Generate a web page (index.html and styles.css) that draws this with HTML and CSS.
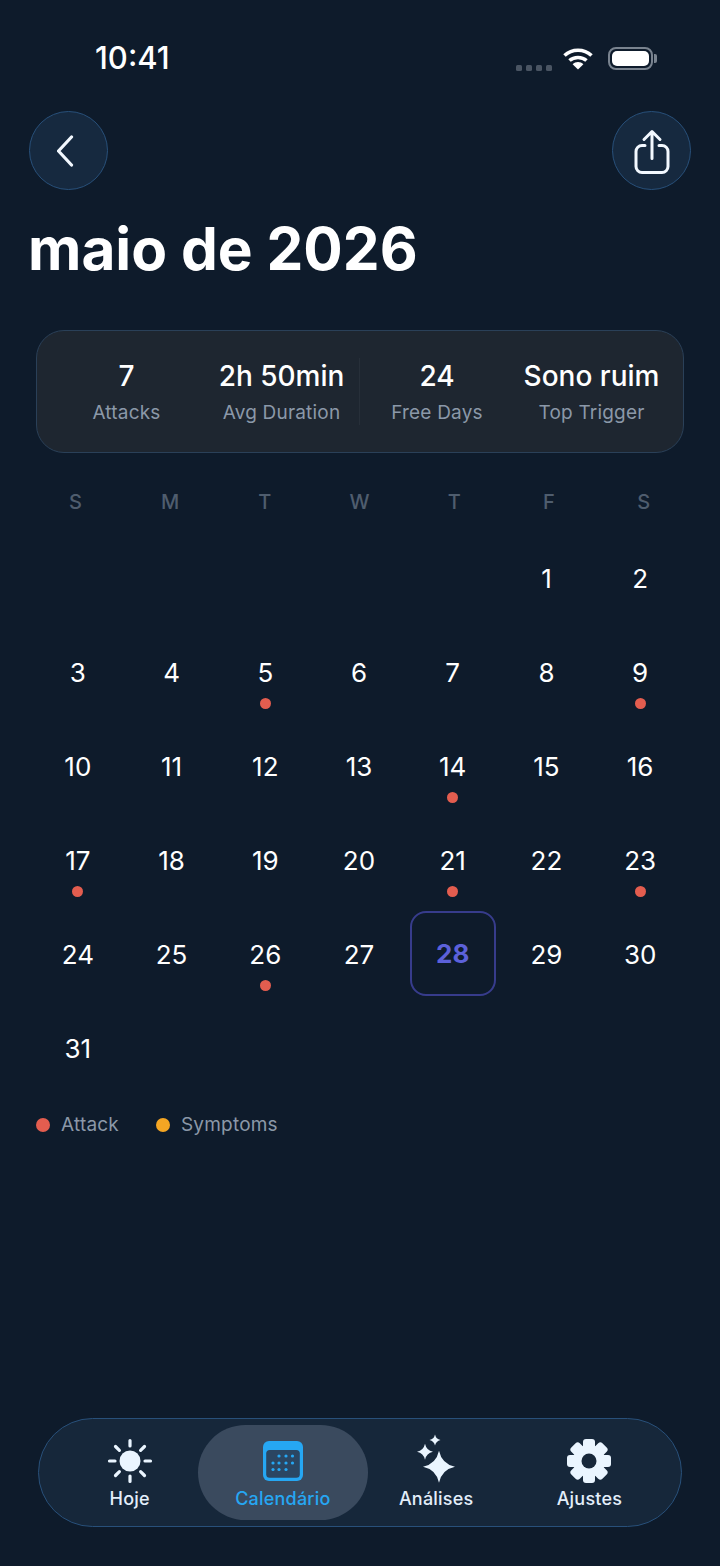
FILE: index.html
```html
<!DOCTYPE html>
<html lang="en">
<head>
    <meta charset="UTF-8">
    <meta name="viewport" content="width=device-width, initial-scale=1.0">
    <title>Calendário</title>
    <link rel="stylesheet" href="styles.css">
</head>
<body>
    <div class="status-bar">
        <span class="status-time">10:41</span>
        <div class="status-icons">
            <span class="signal"><i></i><i></i><i></i><i></i></span>
            <svg class="wifi" width="32" height="22" viewBox="0 0 30 22">
                <path d="M1.5 7.5C9 .5 21 .5 28.5 7.5" fill="none" stroke="#fff" stroke-width="3.6"/>
                <path d="M6.5 12.5C11 8.4 19 8.4 23.5 12.5" fill="none" stroke="#fff" stroke-width="3.6"/>
                <path d="M9.6 16.2C12.6 13.2 17.4 13.2 20.4 16.2L15 21.6Z" fill="#fff"/>
            </svg>
            <span class="battery"><span class="battery-fill"></span></span>
        </div>
    </div>

    <div class="top-actions">
        <button class="round-btn">
            <svg width="24" height="34" viewBox="0 0 24 34" fill="none" stroke="#f2f8ff" stroke-width="3.2" stroke-linecap="round" stroke-linejoin="round">
                <path d="M14.500 3L1.500 17L14.500 31"/>
            </svg>
        </button>
        <button class="round-btn">
            <svg width="36" height="46" viewBox="0 -1.500 36 46" fill="none" stroke="#f2f8ff" stroke-width="3" stroke-linecap="round" stroke-linejoin="round">
                <path d="M11 16H8a6 6 0 0 0-6 6v15a6 6 0 0 0 6 6h20a6 6 0 0 0 6-6V22a6 6 0 0 0-6-6h-3"/>
                <path d="M18 29V3M10 10L18 2L26 10"/>
            </svg>
        </button>
    </div>

    <h1 class="month-title">maio de 2026</h1>

    <section class="stats-card">
        <div class="stat">
            <span class="stat-value">7</span>
            <span class="stat-label">Attacks</span>
        </div>
        <div class="stat">
            <span class="stat-value">2h 50min</span>
            <span class="stat-label">Avg Duration</span>
        </div>
        <div class="stat stat-divided">
            <span class="stat-value">24</span>
            <span class="stat-label">Free Days</span>
        </div>
        <div class="stat">
            <span class="stat-value">Sono ruim</span>
            <span class="stat-label">Top Trigger</span>
        </div>
    </section>

    <div class="weekdays">
        <span>S</span><span>M</span><span>T</span><span>W</span><span>T</span><span>F</span><span>S</span>
    </div>

    <div class="calendar" id="calendar"></div>

    <div class="legend">
        <span class="legend-item"><i class="dot dot-attack"></i>Attack</span>
        <span class="legend-item"><i class="dot dot-symptoms"></i>Symptoms</span>
    </div>

    <nav class="tab-bar">
        <a class="tab">
            <svg width="46" height="46" viewBox="0 0 46 46" fill="#eaf5ff" stroke="#eaf5ff" stroke-width="3.2" stroke-linecap="round">
                <circle cx="23" cy="23" r="10.5" stroke="none"/>
                <path d="M23 2.5V8M23 38V43.5M2.5 23H8M38 23H43.5M8.5 8.5L12.4 12.4M33.6 33.6L37.5 37.5M8.5 37.5L12.4 33.6M33.6 12.4L37.5 8.5" fill="none"/>
            </svg>
            <span>Hoje</span>
        </a>
        <a class="tab tab-active">
            <svg width="40" height="46" viewBox="0 -3 40 46">
                <rect width="40" height="40" rx="6" fill="#26a7f3"/>
                <rect x="3.2" y="9" width="33.6" height="27.800" rx="3.500" fill="#2b4662"/>
                <g fill="#26a7f3">
                    <circle cx="16" cy="15" r="1.6"/><circle cx="23" cy="15" r="1.6"/><circle cx="29.500" cy="15" r="1.6"/>
                    <circle cx="10" cy="22" r="1.6"/><circle cx="16" cy="22" r="1.6"/><circle cx="23" cy="22" r="1.6"/><circle cx="29.500" cy="22" r="1.6"/>
                    <circle cx="10" cy="28.500" r="1.6"/><circle cx="16" cy="28.500" r="1.6"/><circle cx="23" cy="28.500" r="1.6"/>
                </g>
            </svg>
            <span>Calendário</span>
        </a>
        <a class="tab">
            <svg class="sparkles" width="46" height="46" viewBox="0 0 46 46" fill="#eaf5ff">
                <path d="M26 12.7Q28.8 25.900 42 28.700Q28.800 31.500 26 44.700Q23.200 31.500 10 28.700Q23.200 25.900 26 12.700Z"/>
                <path d="M12 5.700Q13.400 12.300 20 13.700Q13.400 15.100 12 21.700Q10.600 15.100 4 13.700Q10.600 12.300 12 5.700Z"/>
                <path d="M22 -3.500Q23 1 27.500 2Q23 3 22 7.500Q21 3 16.500 2Q21 1 22 -3.500Z"/>
            </svg>
            <span>Análises</span>
        </a>
        <a class="tab">
            <svg width="46" height="46" viewBox="0 0 46 46">
                <g fill="#eaf5ff">
                    <circle cx="23" cy="23" r="16"/>
                    <rect x="17" y="1" width="12" height="44" rx="3"/>
                    <rect x="17" y="1" width="12" height="44" rx="3" transform="rotate(45 23 23)"/>
                    <rect x="17" y="1" width="12" height="44" rx="3" transform="rotate(90 23 23)"/>
                    <rect x="17" y="1" width="12" height="44" rx="3" transform="rotate(135 23 23)"/>
                </g>
                <circle cx="23" cy="23" r="7.500" fill="#16273a"/>
            </svg>
            <span>Ajustes</span>
        </a>
    </nav>

    <script>
        const calendar = document.getElementById('calendar');
        const attackDays = [5, 9, 14, 17, 21, 23, 26];
        const today = 28;

        for (let i = 0; i < 5; i++) {
            calendar.appendChild(document.createElement('div'));
        }

        for (let day = 1; day <= 31; day++) {
            const cell = document.createElement('div');
            cell.className = 'day';
            if (day === today) cell.classList.add('day-today');
            cell.textContent = day;
            if (attackDays.includes(day)) {
                const mark = document.createElement('i');
                mark.className = 'day-mark';
                cell.appendChild(mark);
            }
            calendar.appendChild(cell);
        }
    </script>
</body>
</html>
```

FILE: styles.css
```css
:root {
    --color-bg: #0e1b2b;
    --color-text: #ffffff;
    --color-muted: #8b98a8;
    --color-border: #28507a;
    --color-button: #16293f;
    --color-attack: #e35d4f;
    --color-symptoms: #f5a623;
    --color-accent: #26a7f3;
    --color-today: #5c61da;
}

* {
    box-sizing: border-box;
}

html {
    background-color: var(--color-bg);
}

body {
    margin: 0;
    width: 720px;
    height: 1566px;
    display: flex;
    flex-direction: column;
    overflow: hidden;
    font-family: Inter, 'Noto Sans', sans-serif;
    background-color: var(--color-bg);
    color: var(--color-text);
}

/* Status bar */
.status-bar {
    height: 111px;
    padding: 40px 67px 0 95px;
    display: flex;
    justify-content: space-between;
    align-items: flex-start;
}

.status-time {
    font-size: 31px;
    font-weight: 500;
    line-height: 36px;
}

.status-icons {
    display: flex;
    align-items: center;
    gap: 10px;
    padding-top: 6px;
}

.signal {
    display: flex;
    gap: 4px;
    margin-top: 19px;
}

.signal i {
    width: 6px;
    height: 6px;
    border-radius: 1.5px;
    background-color: #4a5563;
}

.battery {
    position: relative;
    width: 45px;
    height: 23px;
    margin-left: 4px;
    padding: 2px;
    border: 2px solid #79838f;
    border-radius: 8px;
}

.battery::after {
    content: '';
    position: absolute;
    right: -6px;
    top: 5px;
    width: 3px;
    height: 9px;
    border-radius: 0 2px 2px 0;
    background-color: #79838f;
}

.battery-fill {
    display: block;
    height: 100%;
    border-radius: 5px;
    background-color: #fff;
}

/* Header */
.top-actions {
    padding: 0 29px;
    display: flex;
    justify-content: space-between;
}

.round-btn {
    width: 79px;
    height: 79px;
    padding: 0;
    display: flex;
    align-items: center;
    justify-content: center;
    border: 1.5px solid var(--color-border);
    border-radius: 50%;
    background-color: var(--color-button);
}

.month-title {
    margin: 24px 0 0 28px;
    font-size: 58.5px;
    font-weight: 700;
    line-height: 70px;
}

/* Stats */
.stats-card {
    margin: 46px 36px 0;
    height: 123px;
    padding: 0 14px 0 12px;
    display: grid;
    grid-template-columns: repeat(4, 1fr);
    align-items: center;
    border: 1.5px solid #2a4058;
    border-radius: 28px;
    background-color: #1e2630;
}

.stat {
    display: flex;
    flex-direction: column;
    align-items: center;
    gap: 8px;
    padding-top: 1px;
}

.stat-divided {
    border-left: 1px solid #272f39;
}

.stat-value {
    font-size: 28px;
    font-weight: 550;
    line-height: 34px;
}

.stat-label {
    font-size: 19px;
    line-height: 24px;
    letter-spacing: 0.2px;
    color: var(--color-muted);
}

/* Calendar */
.weekdays {
    margin: 37px 0 0;
    padding: 0 29px 0 28px;
    display: grid;
    grid-template-columns: repeat(7, 1fr);
    text-align: center;
    font-size: 20px;
    font-weight: 500;
    line-height: 24px;
    color: #4f5d6e;
}

.calendar {
    margin-top: 18px;
    padding: 0 33px 0 31px;
    display: grid;
    grid-template-columns: repeat(7, 1fr);
    grid-auto-rows: 94px;
}

.day {
    position: relative;
    display: flex;
    align-items: center;
    justify-content: center;
    font-size: 26px;
    font-weight: 400;
    line-height: 32px;
}

.day-mark {
    position: absolute;
    left: 50%;
    top: 71.5px;
    width: 11px;
    height: 11px;
    margin-left: -5.5px;
    border-radius: 50%;
    background-color: var(--color-attack);
}

.day-today {
    margin: 3px 4px 6px;
    font-weight: 700;
    color: var(--color-today);
    border: 2px solid #373c8c;
    border-radius: 16px;
}

.legend {
    margin: 17px 0 0 36px;
    display: flex;
    gap: 37px;
}

.legend-item {
    display: flex;
    align-items: center;
    gap: 11px;
    font-size: 19px;
    line-height: 24px;
    letter-spacing: 0.2px;
    color: var(--color-muted);
}

.dot {
    width: 14px;
    height: 14px;
    border-radius: 50%;
}

.dot-attack {
    background-color: var(--color-attack);
}

.dot-symptoms {
    background-color: var(--color-symptoms);
}

/* Bottom navigation */
.tab-bar {
    margin: auto 38px 39px;
    height: 109px;
    padding: 6px 15px 6px 14px;
    display: grid;
    grid-template-columns: repeat(4, 1fr);
    border: 1.5px solid var(--color-border);
    border-radius: 55px;
    background-color: #16273a;
}

.tab {
    display: flex;
    flex-direction: column;
    align-items: center;
    justify-content: flex-end;
    gap: 4px;
    padding-bottom: 10px;
    font-size: 18px;
    font-weight: 450;
    line-height: 22px;
    letter-spacing: 0.2px;
    color: #e3eefa;
}

.tab svg {
    overflow: visible;
}

.tab-active {
    margin: 0 -8px;
    border-radius: 48px;
    background-color: #3a4a5e;
    color: var(--color-accent);
}
```
